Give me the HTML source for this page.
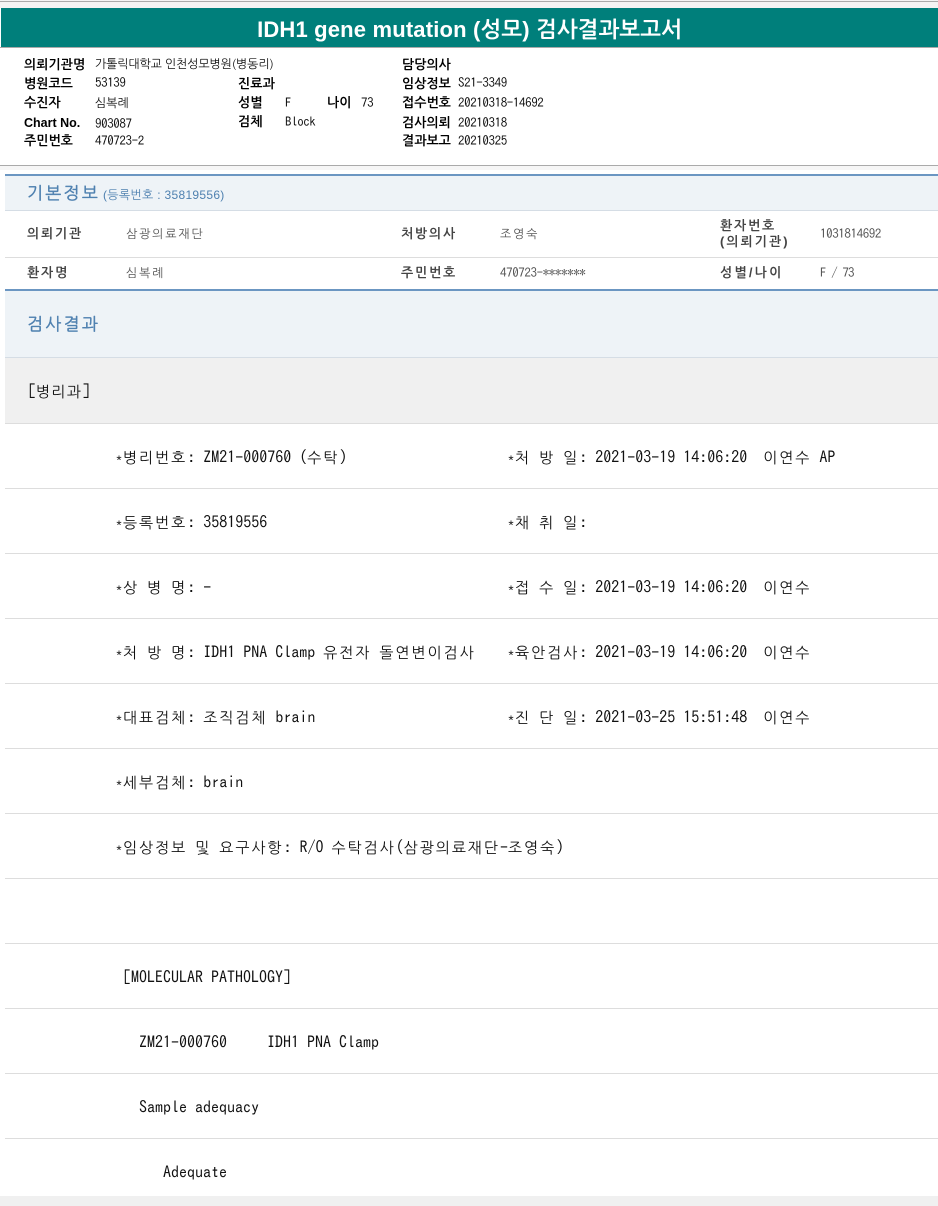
<!DOCTYPE html>
<html lang="ko"><head><meta charset="utf-8"><title>IDH1 gene mutation</title>
<style>
html,body{margin:0;padding:0;background:#fff}
#p{position:relative;width:938px;height:1206px;overflow:hidden;background:#fff;font-family:"Liberation Sans","NanumGothic","Noto Sans CJK KR",sans-serif;color:#222}
#p div{position:absolute;white-space:pre}
.b{background:#ddd;height:1px;left:5px;right:0}
.h{font-family:"IPAGothic","NanumGothic",sans-serif;font-size:13px;letter-spacing:-.4px;line-height:14px;color:#111}
.hb{font-size:13px;line-height:14px;font-weight:bold;color:#000}
.t{font-family:"IPAGothic","NanumGothic",sans-serif;font-size:13px;letter-spacing:-.4px;line-height:14px;color:#555}
.k{font-size:12px;letter-spacing:1.8px}
.tb{font-size:13px;line-height:14px;font-weight:bold;color:#444;letter-spacing:1.8px}
.s{font-size:17px;line-height:20px;color:#4f81b0;letter-spacing:2.3px;-webkit-text-stroke:.4px #4f81b0}
.m{font-family:"IPAGothic","Liberation Mono",monospace;font-size:16px;line-height:18px;color:#111}
.m span{font-family:"NanumGothic","Noto Sans CJK KR",sans-serif;font-size:15px;letter-spacing:1.95px}
.m i{font-family:"Liberation Mono",monospace;font-style:normal;font-size:13.33px;position:relative;top:2px}
</style></head><body><div id="p">
<div style="left:0;top:0;width:938px;height:8px;background:#f4f4f4"></div>
<div style="left:0;top:1px;width:938px;height:1px;background:#aaa"></div>
<div style="left:1px;top:8px;width:937px;height:39px;background:#007f7b;color:#fff;font-size:22px;letter-spacing:.17px;font-weight:bold;line-height:43px;text-align:center">IDH1 gene mutation (성모) 검사결과보고서</div>
<div style="left:0;top:47px;width:938px;height:1px;background:#aaa"></div>

<div class="hb" style="left:24px;top:58px">의뢰기관명</div><div class="h" style="left:95px;top:57px;font-size:12px;letter-spacing:-.15px;font-family:'NanumGothic',sans-serif">가톨릭대학교 인천성모병원(병동리)</div>
<div class="hb" style="left:24px;top:77px">병원코드</div><div class="h" style="left:95px;top:76px">53139</div>
<div class="hb" style="left:24px;top:96px">수진자</div><div class="h" style="left:95px;top:96px;font-size:12px;letter-spacing:0">심복례</div>
<div class="hb" style="left:24px;top:116px;font-size:12.5px">Chart No.</div><div class="h" style="left:95px;top:117px">903087</div>
<div class="hb" style="left:24px;top:134px">주민번호</div><div class="h" style="left:95px;top:134px">470723-2</div>
<div class="hb" style="left:238px;top:77px">진료과</div>
<div class="hb" style="left:238px;top:96px">성별</div><div class="h" style="left:285px;top:96px">F</div>
<div class="hb" style="left:327px;top:96px">나이</div><div class="h" style="left:361px;top:96px">73</div>
<div class="hb" style="left:238px;top:115px">검체</div><div class="h" style="left:285px;top:115px">Block</div>
<div class="hb" style="left:402px;top:58px">담당의사</div>
<div class="hb" style="left:402px;top:77px">임상정보</div><div class="h" style="left:458px;top:76px">S21-3349</div>
<div class="hb" style="left:402px;top:96px">접수번호</div><div class="h" style="left:458px;top:96px">20210318-14692</div>
<div class="hb" style="left:402px;top:116px">검사의뢰</div><div class="h" style="left:458px;top:116px">20210318</div>
<div class="hb" style="left:402px;top:134px">결과보고</div><div class="h" style="left:458px;top:134px">20210325</div>

<div style="left:0;top:165px;width:938px;height:1px;background:#aaa"></div>
<div style="left:0;top:166px;width:938px;height:4px;background:#f6f6f6"></div>
<div style="left:5px;top:174px;right:0;height:36px;background:#eef3f7;border-top:2px solid #6b96c2;box-sizing:border-box"></div>
<div class="s" style="left:27px;top:184px">기본정보</div>
<div style="left:103px;top:188px;font-size:12px;letter-spacing:.3px;line-height:15px;color:#4f81b0">(등록번호 : 35819556)</div>
<div class="b" style="top:210px;background:#d5dde5"></div>

<div class="tb" style="left:27px;top:227px">의뢰기관</div><div class="t k" style="left:126px;top:227px">삼광의료재단</div>
<div class="tb" style="left:401px;top:227px">처방의사</div><div class="t k" style="left:500px;top:227px">조영숙</div>
<div class="tb" style="left:720px;top:218px;line-height:15px">환자번호</div><div class="tb" style="left:720px;top:234px;line-height:15px;letter-spacing:2px">(의뢰기관)</div><div class="t" style="left:820px;top:227px">1031814692</div>
<div class="b" style="top:257px"></div>
<div class="tb" style="left:27px;top:266px">환자명</div><div class="t k" style="left:126px;top:266px">심복례</div>
<div class="tb" style="left:401px;top:266px">주민번호</div><div class="t" style="left:500px;top:266px">470723-*******</div>
<div class="tb" style="left:720px;top:266px;letter-spacing:2.2px">성별/나이</div><div class="t" style="left:820px;top:266px;letter-spacing:-.9px">F / 73</div>

<div style="left:5px;top:289px;right:0;height:2px;background:#6b96c2"></div>
<div style="left:5px;top:291px;right:0;height:66px;background:#eef3f7"></div>
<div class="s" style="left:27px;top:315px">검사결과</div>
<div class="b" style="top:357px;background:#d5dde5"></div>
<div style="left:5px;top:358px;right:0;height:65px;background:#f0f0f0"></div>
<div class="m" style="left:28px;top:382px">[<span style="letter-spacing:1.3px">병리과</span>]</div>
<div class="b" style="top:423px"></div>

<div class="m" style="left:115px;top:448px"><i>*</i><span>병리번호</span>: ZM21-000760 (<span>수탁</span>)</div>
<div class="m" style="left:507px;top:448px"><i>*</i><span>처</span> <span>방</span> <span>일</span>: 2021-03-19 14:06:20  <span>이연수</span> AP</div>
<div class="b" style="top:488px"></div>
<div class="m" style="left:115px;top:513px"><i>*</i><span>등록번호</span>: 35819556</div>
<div class="m" style="left:507px;top:513px"><i>*</i><span>채</span> <span>취</span> <span>일</span>:</div>
<div class="b" style="top:553px"></div>
<div class="m" style="left:115px;top:578px"><i>*</i><span>상</span> <span>병</span> <span>명</span>: -</div>
<div class="m" style="left:507px;top:578px"><i>*</i><span>접</span> <span>수</span> <span>일</span>: 2021-03-19 14:06:20  <span>이연수</span></div>
<div class="b" style="top:618px"></div>
<div class="m" style="left:115px;top:643px"><i>*</i><span>처</span> <span>방</span> <span>명</span>: IDH1 PNA Clamp <span>유전자</span> <span>돌연변이검사</span></div>
<div class="m" style="left:507px;top:643px"><i>*</i><span>육안검사</span>: 2021-03-19 14:06:20  <span>이연수</span></div>
<div class="b" style="top:683px"></div>
<div class="m" style="left:115px;top:708px"><i>*</i><span>대표검체</span>: <span>조직검체</span> brain</div>
<div class="m" style="left:507px;top:708px"><i>*</i><span>진</span> <span>단</span> <span>일</span>: 2021-03-25 15:51:48  <span>이연수</span></div>
<div class="b" style="top:748px"></div>
<div class="m" style="left:115px;top:773px"><i>*</i><span>세부검체</span>: brain</div>
<div class="b" style="top:813px"></div>
<div class="m" style="left:115px;top:838px"><i>*</i><span>임상정보</span> <span>및</span> <span>요구사항</span>: R/O <span>수탁검사</span>(<span>삼광의료재단</span>-<span>조영숙</span>)</div>
<div class="b" style="top:878px"></div>
<div class="b" style="top:943px"></div>
<div class="m" style="left:123px;top:968px">[MOLECULAR PATHOLOGY]</div>
<div class="b" style="top:1008px"></div>
<div class="m" style="left:139px;top:1033px">ZM21-000760     IDH1 PNA Clamp</div>
<div class="b" style="top:1073px"></div>
<div class="m" style="left:139px;top:1098px">Sample adequacy</div>
<div class="b" style="top:1138px"></div>
<div class="m" style="left:163px;top:1163px">Adequate</div>
<div style="left:0;top:1196px;width:938px;height:10px;background:#f0f0f0"></div>
</div></body></html>
